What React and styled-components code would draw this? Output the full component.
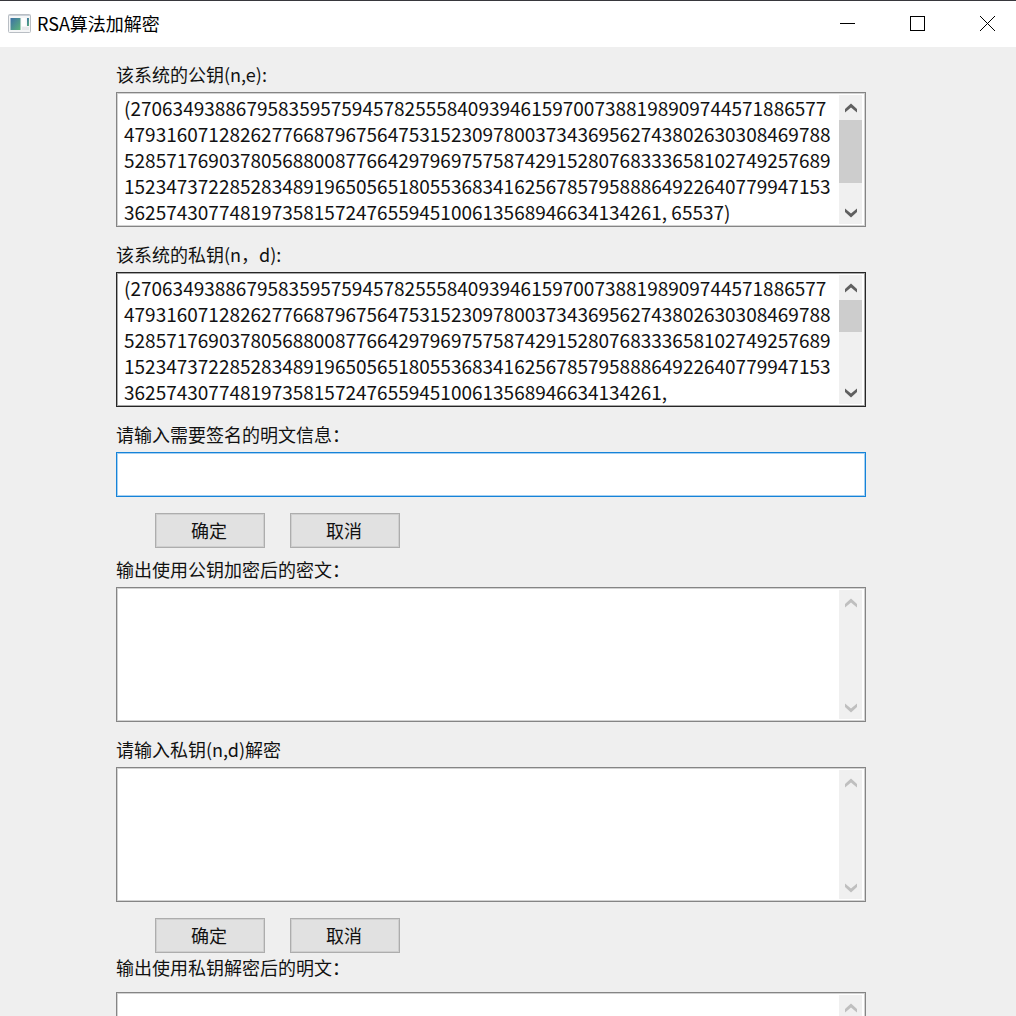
import React, { useState } from 'react';
import styled, { createGlobalStyle } from 'styled-components';

const GlobalStyle = createGlobalStyle`
    * {
        box-sizing: border-box;
    }
    body {
        margin: 0;
        background: #efefef;
        color: #111;
        font-family: 'Noto Sans CJK SC', sans-serif;
        font-size: 18px;
        overflow: hidden;
    }
`;

const Window = styled.div`
    height: 100vh;
    overflow: hidden;
    border-top: 1px solid #37373c;
`;

const TitleBar = styled.header`
    display: flex;
    align-items: center;
    height: 46px;
    padding: 0 0 2px 8px;
    background: #fff;
    color: #000;
`;

const Title = styled.h1`
    flex: 1;
    margin: 0 0 0 6px;
    font-size: 18px;
    font-weight: 400;
    line-height: 26px;
`;

const CaptionButtons = styled.div`
    display: flex;
    margin-right: -6px;
`;

const CaptionButton = styled.button`
    display: flex;
    align-items: center;
    justify-content: center;
    width: 70px;
    height: 44px;
    padding: 0;
    border: 0;
    background: transparent;
    &:hover {
        background: #e5e5e5;
    }
`;

const Form = styled.main`
    padding: 15px 150px 0 116px;
`;

const Field = styled.section`
    margin-bottom: 15px;
`;

const Label = styled.label`
    display: block;
    margin-bottom: ${(props) => (props.$loose ? '13px' : '6px')};
    line-height: 24px;
`;

const borders = {
    normal: '#858585',
    hover: '#262626',
    focus: '#1683d8',
};

const shades = {
    normal: '#d2d2d2',
    hover: '#a6a6a6',
    focus: '#a5d0f2',
};

const Box = styled.div`
    display: flex;
    height: 135px;
    padding: 2px;
    border: 1px solid ${(props) => borders[props.$tone || 'normal']};
    background: #fff;
    box-shadow: inset 0 0 0 1px ${(props) => shades[props.$tone || 'normal']};
`;

const TextArea = styled.textarea`
    flex: 1;
    min-width: 0;
    padding: 0 0 0 5px;
    border: 0;
    outline: 0;
    resize: none;
    overflow: hidden;
    background: transparent;
    color: #111;
    font-family: inherit;
    font-size: 19px;
    line-height: 26px;
    white-space: pre;
`;

const TextInput = styled.input`
    display: block;
    width: 100%;
    height: 45px;
    padding: 0 6px;
    border: 1px solid ${borders.focus};
    box-shadow: inset 0 0 0 1px ${shades.focus};
    outline: 0;
    background: #fff;
    font: inherit;
`;

const Track = styled.div`
    display: flex;
    flex-direction: column;
    width: 23px;
    margin-right: 1px;
    background: #f0f0f0;
`;

const ArrowButton = styled.button`
    display: flex;
    align-items: center;
    justify-content: center;
    height: 25px;
    padding: 2px 0 0;
    border: 0;
    background: transparent;
    color: #606060;
    &:disabled {
        color: #bfbfbf;
    }
`;

const Groove = styled.div`
    flex: 1;
`;

const Thumb = styled.div`
    height: ${(props) => props.$size}px;
    background: #cdcdcd;
`;

const ButtonRow = styled.div`
    display: flex;
    gap: 25px;
    padding: 1px 0 0 39px;
    margin-bottom: ${(props) => (props.$tight ? '2px' : '9px')};
`;

const PushButton = styled.button`
    width: 110px;
    height: 35px;
    padding: 0 2px 2px 0;
    border: 1px solid #adadad;
    box-shadow: inset 0 0 0 1px #cfcfcf;
    background: #e1e1e1;
    color: #111;
    font: inherit;
    &:hover {
        border-color: #0078d7;
        background: #e5f1fb;
    }
`;

const modulus = [
    '(270634938867958359575945782555840939461597007388198909744571886577',
    '4793160712826277668796756475315230978003734369562743802630308469788',
    '5285717690378056880087766429796975758742915280768333658102749257689',
    '1523473722852834891965056518055368341625678579588864922640779947153',
    '362574307748197358157247655945100613568946634134261,',
].join('\n');

const AppIcon = () => (
    <svg width='23' height='19' viewBox='0 0 23 19' aria-hidden='true'>
        <defs>
            <linearGradient id='pane' x1='0' y1='0' x2='1' y2='1'>
                <stop offset='0' stopColor='#3c6fa6' />
                <stop offset='1' stopColor='#5cb57a' />
            </linearGradient>
        </defs>
        <rect x='0.5' y='0.5' width='22' height='18' rx='1' fill='#f5f6f7' stroke='#b9bec4' />
        <path d='M1 1.5H22' stroke='#c9d0d8' />
        <rect x='2.5' y='4' width='10' height='12' fill='url(#pane)' />
        <rect x='13.5' y='4' width='4' height='8' fill='#fff' />
        <rect x='14' y='13' width='7' height='3' fill='#e6e8ea' />
        <rect x='19' y='4' width='2' height='8' fill='url(#pane)' />
    </svg>
);

const Arrow = ({ down }) => (
    <svg width='12' height='11' viewBox='0 0 12 11' aria-hidden='true'>
        <path
            d={down ? 'M0 1.5V5L6 10.5L12 5V1.5L6 6.5Z' : 'M0 9.5V6L6 0.5L12 6V9.5L6 4.5Z'}
            fill='currentColor'
        />
    </svg>
);

const ScrollBar = ({ size }) => (
    <Track>
        <ArrowButton type='button' aria-label='向上滚动' disabled={!size}>
            <Arrow />
        </ArrowButton>
        <Groove>{size ? <Thumb $size={size} /> : null}</Groove>
        <ArrowButton type='button' aria-label='向下滚动' disabled={!size}>
            <Arrow down />
        </ArrowButton>
    </Track>
);

const TextField = ({ id, label, value, tone, thumb, loose, onChange }) => (
    <Field>
        <Label htmlFor={id} $loose={loose}>
            {label}
        </Label>
        <Box $tone={tone}>
            <TextArea
                id={id}
                value={value}
                readOnly={!onChange}
                spellCheck={false}
                onChange={onChange}
            />
            <ScrollBar size={thumb} />
        </Box>
    </Field>
);

const App = () => {
    const [message, setMessage] = useState('');
    const [privateKey, setPrivateKey] = useState('');

    return (
        <Window>
            <GlobalStyle />
            <TitleBar>
                <AppIcon />
                <Title>RSA算法加解密</Title>
                <CaptionButtons>
                    <CaptionButton type='button' aria-label='最小化'>
                        <svg width='15' height='15' viewBox='0 0 15 15'>
                            <path d='M0 7.5H15' stroke='#000' />
                        </svg>
                    </CaptionButton>
                    <CaptionButton type='button' aria-label='最大化'>
                        <svg width='15' height='15' viewBox='0 0 15 15'>
                            <rect
                                x='0.5'
                                y='0.5'
                                width='14'
                                height='14'
                                fill='none'
                                stroke='#000'
                            />
                        </svg>
                    </CaptionButton>
                    <CaptionButton type='button' aria-label='关闭'>
                        <svg width='15' height='15' viewBox='0 0 15 15'>
                            <path d='M0 0L15 15M15 0L0 15' stroke='#000' />
                        </svg>
                    </CaptionButton>
                </CaptionButtons>
            </TitleBar>
            <Form>
                <TextField
                    id='public-key'
                    label='该系统的公钥(n,e):'
                    value={`${modulus} 65537)`}
                    thumb={63}
                />
                <TextField
                    id='private-key'
                    label='该系统的私钥(n，d):'
                    value={modulus}
                    tone='hover'
                    thumb={32}
                />
                <Field>
                    <Label htmlFor='message'>请输入需要签名的明文信息：</Label>
                    <TextInput
                        id='message'
                        value={message}
                        onChange={(e) => setMessage(e.target.value)}
                    />
                </Field>
                <ButtonRow>
                    <PushButton type='button'>确定</PushButton>
                    <PushButton type='button' onClick={() => setMessage('')}>
                        取消
                    </PushButton>
                </ButtonRow>
                <TextField id='cipher' label='输出使用公钥加密后的密文：' value='' />
                <TextField
                    id='key-input'
                    label='请输入私钥(n,d)解密'
                    value={privateKey}
                    onChange={(e) => setPrivateKey(e.target.value)}
                />
                <ButtonRow $tight>
                    <PushButton type='button'>确定</PushButton>
                    <PushButton type='button' onClick={() => setPrivateKey('')}>
                        取消
                    </PushButton>
                </ButtonRow>
                <TextField id='plain' label='输出使用私钥解密后的明文：' value='' loose />
            </Form>
        </Window>
    );
};

export default App;
